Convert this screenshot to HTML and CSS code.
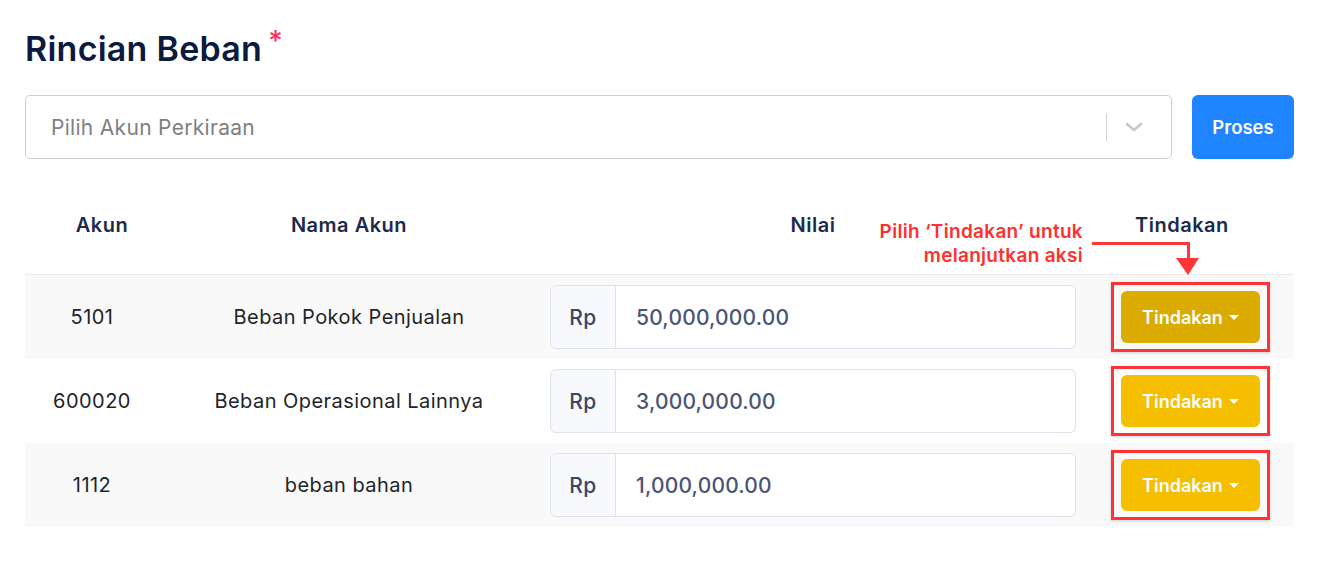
FILE: index.html
```html
<!DOCTYPE html>
<html>
<head>
<meta charset="utf-8">
<link rel="stylesheet" href="styles.css">
</head>
<body>
<div class="page">
  <h1 class="title">Rincian Beban<span class="req">*</span></h1>
  <div class="picker">
    <div class="select">
      <span class="placeholder">Pilih Akun Perkiraan</span>
      <span class="sep"></span>
      <svg class="chev" width="18" height="10" viewBox="0 0 18 10"><path d="M2 2 L9 8 L16 2" fill="none" stroke="#c8c8c8" stroke-width="2.6" stroke-linecap="round" stroke-linejoin="round"/></svg>
    </div>
    <button class="btn-proses">Proses</button>
  </div>
  <div class="table">
    <div class="row head">
      <div class="c c-akun">Akun</div>
      <div class="c c-nama">Nama Akun</div>
      <div class="c c-nilai">Nilai</div>
      <div class="c c-act head-act">Tindakan</div>
      <div class="note">
        <div class="note-text">Pilih ‘Tindakan’ untuk<br>melanjutkan aksi</div>
        <svg class="note-arrow" width="110" height="34" viewBox="0 0 110 34"><path d="M0 1.5 H96.5 V18" fill="none" stroke="#ff3636" stroke-width="3"/><polygon points="84,16 107,16 96,33" fill="#ff3636"/></svg>
      </div>
    </div>
    <div class="row odd">
      <div class="c c-akun">5101</div>
      <div class="c c-nama">Beban Pokok Penjualan</div>
      <div class="c c-nilai"><div class="ig"><span class="addon">Rp</span><span class="val">50,000,000.00</span></div></div>
      <div class="c c-act"><div class="hl"><button class="btn-act dark">Tindakan <span class="caret"></span></button></div></div>
    </div>
    <div class="row">
      <div class="c c-akun">600020</div>
      <div class="c c-nama">Beban Operasional Lainnya</div>
      <div class="c c-nilai"><div class="ig"><span class="addon">Rp</span><span class="val">3,000,000.00</span></div></div>
      <div class="c c-act"><div class="hl"><button class="btn-act">Tindakan <span class="caret"></span></button></div></div>
    </div>
    <div class="row odd">
      <div class="c c-akun">1112</div>
      <div class="c c-nama">beban bahan</div>
      <div class="c c-nilai"><div class="ig"><span class="addon">Rp</span><span class="val">1,000,000.00</span></div></div>
      <div class="c c-act"><div class="hl"><button class="btn-act">Tindakan <span class="caret"></span></button></div></div>
    </div>
  </div>
</div>
</body>
</html>
```
FILE: styles.css
```css
* { box-sizing: border-box; }
html, body { margin: 0; padding: 0; background: #fff; }
body { font-family: Inter, "Noto Sans", sans-serif; }
.page { padding: 27px 25px 0 25px; width: 1319px; }
.title { margin: 0; font-size: 34px; font-weight: 600; color: #0d1a3f; line-height: 42px; letter-spacing: 0.25px; }
.req { color: #ff2e5c; font-size: 28px; font-weight: 500; vertical-align: 10px; margin-left: 6px; line-height: 1; }
.picker { display: flex; gap: 20px; margin-top: 25px; height: 64px; }
.select { flex: 1; display: flex; align-items: center; border: 1px solid #cfcfcf; border-radius: 5px; padding-left: 25px; }
.placeholder { flex: 1; color: #808080; font-size: 21px; letter-spacing: 0.3px; }
.sep { width: 1px; height: 28px; background: #d3d3d3; margin-right: 18px; }
.chev { margin-right: 28px; }
.btn-proses { width: 102px; border: none; border-radius: 6px; background: #1e84ff; color: #fff; font-family: inherit; font-size: 18.5px; font-weight: 600; }
.table { margin-top: 32px; }
.row { display: grid; grid-template-columns: 154px 340px 588px 186px; height: 84px; align-items: center; }
.row.head { height: 84px; border-bottom: 1px solid #ececec; position: relative; align-items: start; }
.row.odd { background: #f9f9f9; }
.c { text-align: center; font-size: 20px; letter-spacing: 0.45px; color: #212529; }
.row:not(.head) .c-akun { padding-right: 20px; }
.head .c { font-weight: 600; font-size: 20px; letter-spacing: 0.5px; color: #1e2a4a; padding-top: 22px; }
.head .head-act { text-align: left; padding-left: 28px; }
.c-nilai { padding: 0 31px; }
.ig { display: flex; height: 64px; }
.addon { width: 66px; display: flex; align-items: center; justify-content: center; background: #f8f9fc; border: 1px solid #dde2ee; border-radius: 6px 0 0 6px; color: #3b4664; font-size: 21px; font-weight: 500; }
.val { flex: 1; display: flex; align-items: center; padding-left: 20px; background: #fff; border: 1px solid #dde2ee; border-left: none; border-radius: 0 6px 6px 0; color: #4a5577; font-size: 21px; letter-spacing: 0.2px; font-weight: 500; }
.c-act { text-align: left; padding-left: 4px; }
.hl { display: inline-block; border: 3px solid #ff3333; padding: 6px 7px; box-shadow: 0 1px 3px rgba(0,0,0,0.18); }
.btn-act { width: 139px; height: 52px; border: none; border-radius: 6px; background: #f5bf00; color: #fff; font-family: inherit; font-size: 18px; font-weight: 600; display: flex; align-items: center; justify-content: center; gap: 6px; }
.btn-act.dark { background: #dcab00; }
.caret { width: 0; height: 0; border-left: 5px solid transparent; border-right: 5px solid transparent; border-top: 5px solid #fff; margin-top: 1px; }
.note { position: absolute; left: 838px; top: 29px; display: flex; align-items: flex-start; }
.note-text { color: #ff3030; font-weight: 600; font-size: 19px; letter-spacing: 0.3px; line-height: 24px; text-align: right; width: 220px; }
.note-arrow { margin-left: 9px; margin-top: 21.5px; }
```
